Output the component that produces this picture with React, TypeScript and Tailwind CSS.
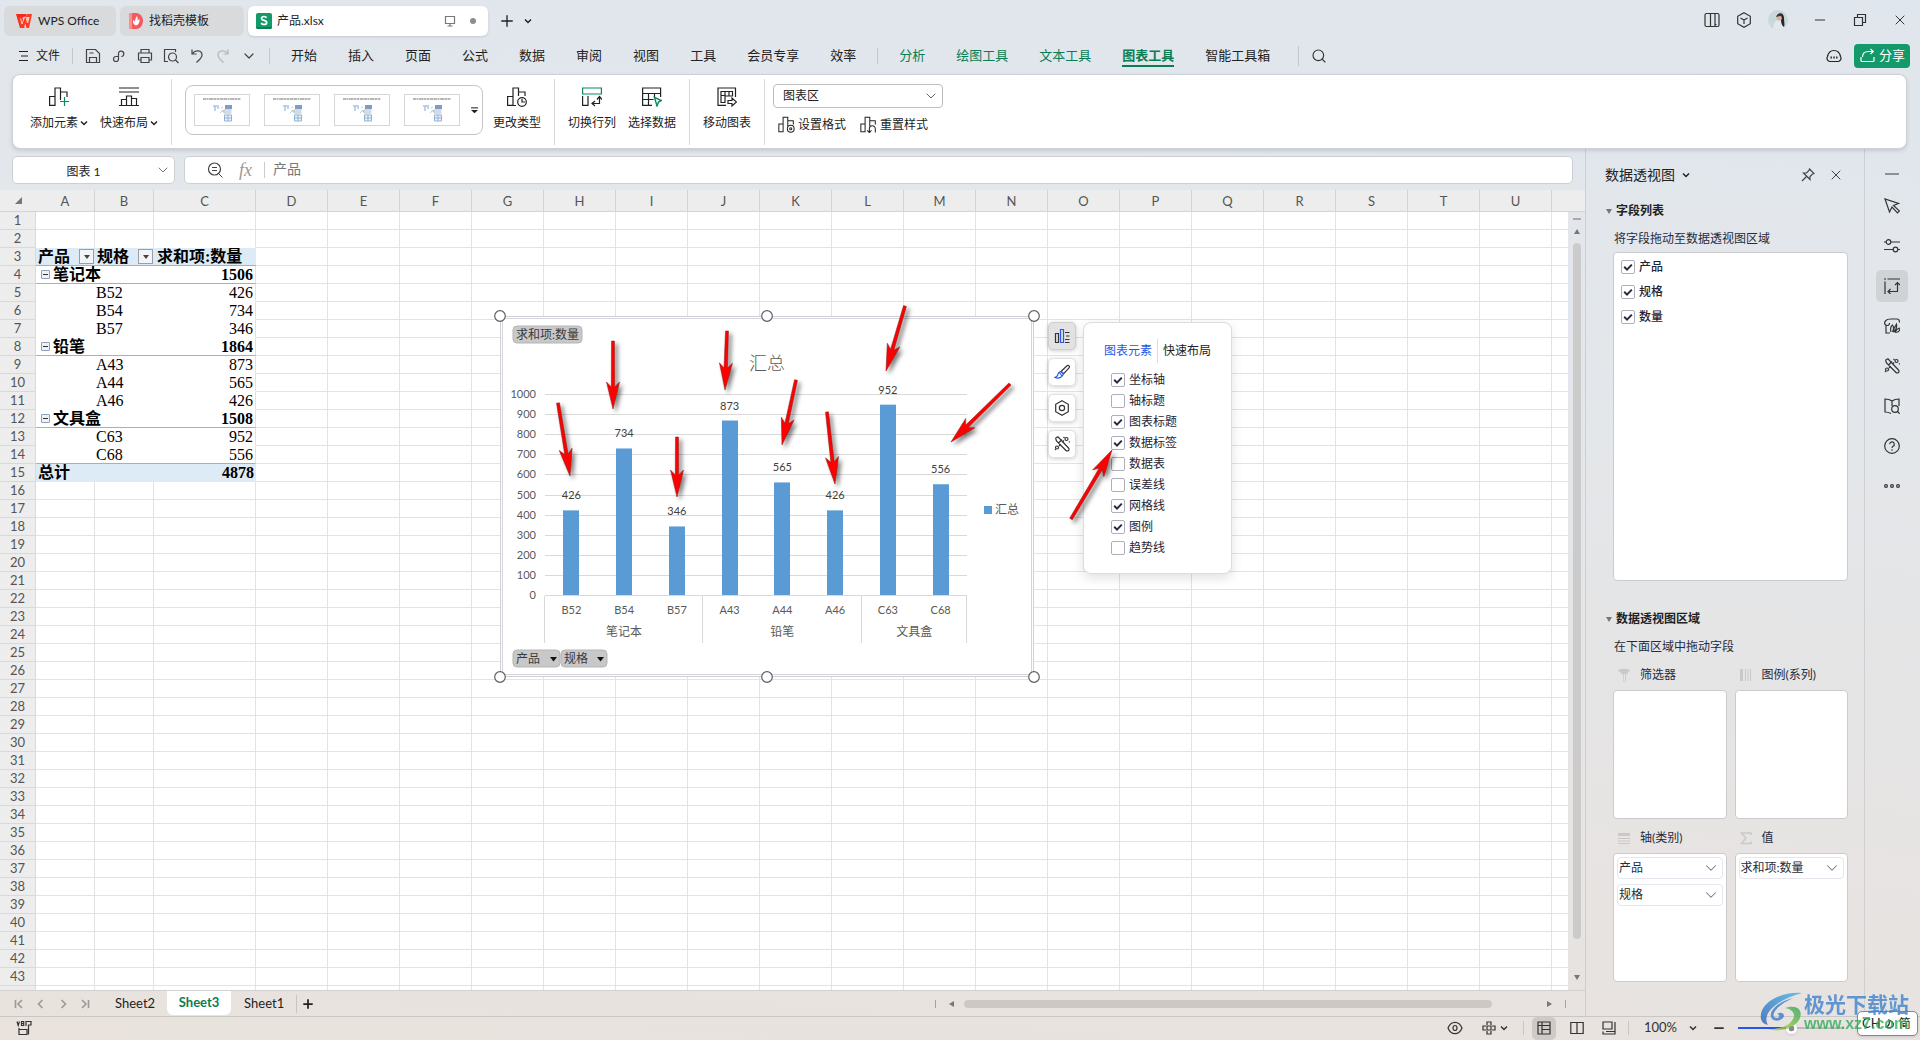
import { useState, type ReactNode } from 'react';
import { ChevronDown, Minus, Plus, Search, X } from 'lucide-react';
import clsx from 'clsx';

const UI_FONT = "font-['Lato','Noto_Sans_CJK_SC',sans-serif]";
const CELL_FONT = "font-['Liberation_Serif','Noto_Sans_CJK_SC',serif]";

function Icon({ size = 'size-5', box = 20, children }: { size?: string; box?: number; children: ReactNode }) {
  return (
    <svg
      viewBox={`0 0 ${box} ${box}`}
      className={clsx('shrink-0', size)}
      fill="none"
      stroke="currentColor"
      strokeWidth="1.2"
      aria-hidden="true"
    >
      {children}
    </svg>
  );
}

function Caret({ className }: { className?: string }) {
  return (
    <svg viewBox="0 0 8 8" className={clsx('size-2 shrink-0', className)} fill="none" stroke="currentColor" strokeWidth="1.500">
      <path d="m1 2.500 3 3 3-3" />
    </svg>
  );
}

function Check({ label, checked = true, bold }: { label: string; checked?: boolean; bold?: boolean }) {
  const [on, setOn] = useState(checked);
  return (
    <label className="flex items-center gap-1">
      <span className="relative flex size-[14px]">
        <input
          type="checkbox"
          checked={on}
          onChange={() => setOn(!on)}
          className="size-[14px] appearance-none rounded-[2px] border border-[#adb0ba] bg-white"
        />
        {on && (
          <svg viewBox="0 0 14 14" className="pointer-events-none absolute inset-0 size-[14px]" fill="none" stroke="#252a3d" strokeWidth="2">
            <path d="M3.2 6.8 6 9.6 10.8 4.6" />
          </svg>
        )}
      </span>
      <span className={clsx('text-xs leading-4 text-[#1f2433]', bold && 'font-medium')}>{label}</span>
    </label>
  );
}

/* ---------- title bar ---------- */

function TitleBar() {
  return (
    <header className="flex h-10 shrink-0 items-start pt-[6px] pl-1 text-xs text-[#222]">
      <button type="button" className="flex h-[30px] w-28 items-center gap-[6px] rounded-md bg-[#d8dadc] pl-3">
        <svg viewBox="0 0 16 14" className="h-[14px] w-4">
          <path d="M0 0h10l1 3.200h-4.600l2.200 10.800h-4.600z" fill="#f5281e" />
          <path d="M2.500 3h2.500l1.400 6 2-6h2l1.400 5 1.200-5h-2.500V0H16l-3 14H10.500L9.300 9.500 7.500 14H4.800z" fill="#fb3b22" />
          <path d="M4.700 4.500 6 10l2.600-7h1.200l1.800 6 1.500-6" fill="none" stroke="#ffdcd4" strokeWidth=".9" />
        </svg>
        WPS Office
      </button>
      <button type="button" className="ml-1 flex h-[30px] w-[124px] items-center gap-[6px] rounded-md bg-[#d8dadc] pl-[9px]">
        <svg viewBox="0 0 14 16" className="h-4 w-[14px]">
          <path d="M0 2a2 2 0 0 1 2-2h5a7 8 0 0 1 0 16H0z" fill="#f15a5e" />
          <path d="M0 2a2 2 0 0 1 2-2h1v16H0z" fill="#ff8d8d" />
          <path d="M7 12.500C3.500 11 4 8.500 4 7c1 .5 1.500 1 2 2 0-2 .5-4 2-6 1 2 .5 3.500.5 5 .5-1 1-1.500 2-2 .5 3-1 6-3.500 6.500z" fill="#fff" />
        </svg>
        找稻壳模板
      </button>
      <div className="ml-1 flex h-[30px] w-60 items-center rounded-md bg-white px-2 shadow-sm">
        <svg viewBox="0 0 16 16" className="size-4">
          <rect width="16" height="16" rx="2" fill="#14996a" />
          <path d="M0 14h16v0a2 2 0 0 1-2 2H2a2 2 0 0 1-2-2z" fill="#0b7c54" />
          <path d="M10.600 4.700C10 3.800 9 3.500 8 3.500c-1.500 0-2.500.8-2.500 2 0 2.600 5.200 1.200 5.200 4 0 1.200-1.100 2-2.700 2-1.200 0-2.300-.5-2.800-1.500" fill="none" stroke="#fff" strokeWidth="1.700" />
        </svg>
        <span className="ml-[5px] flex-1">产品.xlsx</span>
        <Icon size="size-3" box={12}>
          <path d="M1.500 1.500h9v7h-9zM6 8.500v2.500M3.500 11h5" stroke="#777" />
        </Icon>
        <span className="mr-1 ml-[14px] size-[6px] rounded-full bg-[#8d8d8d]" />
      </div>
      <button type="button" aria-label="新建" className="ml-[10px] flex h-[30px] items-center">
        <Plus className="size-[18px]" strokeWidth={1.800} />
      </button>
      <button type="button" aria-label="更多标签" className="ml-2 flex h-[30px] items-center">
        <Caret />
      </button>
      <div className="ml-auto flex h-7 items-center pr-3 text-[#333]">
        <Icon size="size-4" box={16}>
          <rect x="1" y="1.500" width="14" height="13" rx="1.500" />
          <path d="M6.500 1.500v13M11 1.500v13M11 12.500h1.500" />
        </Icon>
        <span className="ml-4 flex">
          <Icon size="size-4" box={16}>
            <path d="M8 .8 14.300 4.300v7.400L8 15.200 1.700 11.700V4.300zM4.500 6 8 8l3.500-2M8 8v4" />
          </Icon>
        </span>
        <svg viewBox="0 0 20 20" className="ml-4 size-5">
          <circle cx="10" cy="10" r="10" fill="#c9d9da" />
          <path d="M5 19c0-5 2-8 5-9l4 1 2 6.500c-2 2-8 3-11 1.500z" fill="#dfeaec" />
          <path d="M10 4c3-2 6 0 6 4 0 4 1 6 0 9-2-1-3-4-3-7z" fill="#2b2430" />
          <circle cx="11.200" cy="8" r="2.600" fill="#dcb2a0" />
          <path d="M8 7c1-4 5-4 7-2l-3 1z" fill="#43303a" />
        </svg>
        <Minus className="ml-6 size-4" strokeWidth={1.500} />
        <span className="ml-6 flex">
          <Icon size="size-4" box={16}>
            <path d="M2.500 5.500h8v8h-8zM5.500 5.500v-3h8v8h-3" />
          </Icon>
        </span>
        <X className="ml-6 size-4" strokeWidth={1.500} />
      </div>
    </header>
  );
}

/* ---------- menu row ---------- */

const MENU = ['开始', '插入', '页面', '公式', '数据', '审阅', '视图', '工具', '会员专享', '效率'];
const CONTEXT_MENU = ['分析', '绘图工具', '文本工具'];

function MenuBar() {
  return (
    <nav className="flex h-[34px] shrink-0 items-center pb-[3px] pl-[18px] text-[13px] text-[#222]">
      <button type="button" className="flex items-center gap-[6px] text-xs">
        <Icon size="size-3" box={12}>
          <path d="M1 1.500h9M3 6h7M1 10.500h9" />
        </Icon>
        文件
      </button>
      <span className="ml-3 h-4 w-px bg-[#c3c6ca]" />
      <div className="ml-3 flex items-center gap-[10px] text-[#444]">
        <Icon size="size-4" box={16}>
          <path d="M1.500 1.500h9l4 4v9h-13zM4.500 14.500v-5h7v5M4.500 5h4" />
        </Icon>
        <Icon size="size-4" box={16}>
          <path d="M7.500 8.500H5a2.500 2.500 0 1 0 2.500 2.500V5A2.700 2.700 0 1 1 10.300 8.500" />
        </Icon>
        <Icon size="size-4" box={16}>
          <path d="M4 5V1.500h8V5M4 12H1.500V5h13v7H12M4 9.500h8v5H4z" />
        </Icon>
        <Icon size="size-4" box={16}>
          <path d="M5 13.500H1.500v-12h11V4" />
          <circle cx="9.500" cy="9" r="4" />
          <path d="m12.500 12 3 3" />
        </Icon>
        <Icon size="size-4" box={16}>
          <path d="M3 1.500V6h4.500M3.500 5.500C6 1.500 13 2 13 7c0 3-2.500 4.500-5.500 7.500" />
        </Icon>
        <span className="flex text-[#b3b6ba]">
          <Icon size="size-4" box={16}>
            <path d="M13 1.500V6H8.500M12.500 5.500C10 1.500 3 2 3 7c0 3 2.500 4.500 5.500 7.500" />
          </Icon>
        </span>
        <ChevronDown className="size-4" strokeWidth={1.800} />
      </div>
      <span className="ml-3 h-4 w-px bg-[#c3c6ca]" />
      <div className="ml-[21px] flex items-center gap-[31px]">
        {MENU.map((m) => (
          <button key={m} type="button">
            {m}
          </button>
        ))}
      </div>
      <span className="ml-[21px] h-4 w-px bg-[#c3c6ca]" />
      <div className="ml-[21px] flex items-center gap-[31px] text-[#0b7d52]">
        {CONTEXT_MENU.map((m) => (
          <button key={m} type="button">
            {m}
          </button>
        ))}
        <button type="button" className="mt-[2px] border-b-2 border-[#0b7d52] font-bold">
          图表工具
        </button>
        <button type="button" className="text-[#222]">
          智能工具箱
        </button>
      </div>
      <span className="ml-7 h-5 w-px bg-[#c3c6ca]" />
      <button type="button" aria-label="搜索" className="ml-3 text-[#333]">
        <Search className="size-4" strokeWidth={1.700} />
      </button>
      <div className="ml-auto flex items-center gap-3 pr-[10px]">
        <Icon size="size-4" box={16}>
          <path d="M4 13.500a3.300 3.300 0 0 1-2.500-5C2.500 4 5 2.500 8 2.500s5.500 1.500 6.500 6a3.300 3.300 0 0 1-2.500 5z" />
          <path d="M4.500 9.500h1.400M7.300 9.500h1.400M10.100 9.500h1.400" strokeWidth="1.800" />
        </Icon>
        <button type="button" className="flex h-6 w-14 items-center gap-1 rounded bg-[#129a6b] pl-[6px] text-[13px] text-white">
          <Icon size="size-[15px]" box={15}>
            <path d="M1 9v3.500a1 1 0 0 0 1 1h11a1 1 0 0 0 1-1V9M2.500 9c0-3 2-5.500 6-5.500h4.500M10.500 1l2.800 2.500L10.500 6" />
          </Icon>
          分享
        </button>
      </div>
    </nav>
  );
}

/* ---------- ribbon ---------- */

const BARS = 'M1 9.500h5v9H1zM6 18.500V1.500h5.500V12M11.500 5.500H18V10';

function RibbonButton({ label, icon, caret, className }: { label: string; icon: ReactNode; caret?: boolean; className?: string }) {
  return (
    <button type="button" className={clsx('flex flex-col items-center gap-2 self-start pt-3 whitespace-nowrap', className)}>
      {icon}
      <span className="flex items-center gap-[2px] leading-4">
        {label}
        {caret && <Caret />}
      </span>
    </button>
  );
}

function Divider() {
  return <span className="h-[66px] w-px self-center bg-[#d9d9d9]" />;
}

function Thumb() {
  return (
    <button type="button" aria-label="图表样式" className="h-8 w-14 border border-[#d6d6d6] bg-white">
      <svg viewBox="0 0 54 30" className="h-[30px] w-[54px]">
        <path d="M8 4h38" stroke="#777" strokeWidth="1.500" strokeDasharray="3 .5 2 .6 4 .4" opacity=".7" />
        <path d="M18 11h6M20 11v5M22 13h2" stroke="#a9c3e2" strokeWidth="1.500" />
        <path d="m25 18 3-3M26 13l2-1" stroke="#b8cde6" />
        <path d="M27 16l3-2v5z" fill="#c9c2bd" />
        <rect x="30" y="10" width="7" height="4" fill="#7f9dc0" />
        <rect x="29.500" y="14" width="7" height="5" fill="#d3dde8" />
        <path d="M29.500 20h7v6h-7zM33 20v6M29.500 23h7" fill="#edf3fa" stroke="#8fb1d6" />
      </svg>
    </button>
  );
}

function Ribbon() {
  return (
    <section className="z-10 mr-[13px] ml-3 flex h-[75px] shrink-0 rounded-lg border border-[#cdd0d4] bg-white text-xs text-[#222] shadow-[0_2px_4px_rgba(0,0,0,0.12)]">
      <RibbonButton
        label="添加元素"
        caret
        className="ml-[17px]"
        icon={
          <Icon>
            <path d="M.6 9.500H6v8.900H.6zM6 18.500V1h5.500v12M11.500 5H18v5" />
            <path d="M11 14.500h9M15.500 10v9" stroke="#0b8a5c" />
          </Icon>
        }
      />
      <RibbonButton
        label="快速布局"
        caret
        className="ml-3"
        icon={
          <Icon>
            <path d="M0 1h20M0 5h20M0 18.500h20M2.500 18.500V12.500h5v6M7.500 12.500V9h5v9.500M12.500 11.500h5v7" />
          </Icon>
        }
      />
      <span className="w-[13px]" />
      <Divider />
      <div className="mt-[10px] ml-[13px] flex h-[50px] w-[298px] items-center gap-[14px] self-start rounded-lg border border-[#c4c4c4] pl-2">
        <Thumb />
        <Thumb />
        <Thumb />
        <Thumb />
        <button type="button" aria-label="更多样式" className="-ml-[3px]">
          <Icon size="size-[7px]" box={8}>
            <path d="M0 1h8" />
            <path d="M0 3.500h8L4 7z" fill="currentColor" stroke="none" />
          </Icon>
        </button>
      </div>
      <RibbonButton
        label="更改类型"
        className="ml-[10px]"
        icon={
          <Icon>
            <path d="M.6 9.500H6v8.900H.6zM6 18.500V1h5.500v8M11.500 5H18v4M6 18.500h3" />
            <circle cx="15" cy="15" r="4.300" />
            <path d="M15 12v3h3" />
          </Icon>
        }
      />
      <span className="w-[13px]" />
      <Divider />
      <RibbonButton
        label="切换行列"
        className="ml-[13px]"
        icon={
          <Icon>
            <path d="M.6 1h18.800v6H.6z" stroke="#0b8a5c" />
            <path d="M.6 9v9.400H6V9M17.500 10v6.500H10M15 12.500l2.500-3 2.500 3M13 14l-3 2.500 3 2.500" />
          </Icon>
        }
      />
      <RibbonButton
        label="选择数据"
        className="ml-3"
        icon={
          <Icon>
            <path d="M10 18.400H.6V1h18v9M.6 6.500h18M6.500 6.500v12M12.500 6.500V11M.6 12.500h11" />
            <path d="m12.500 10.500 7 3-3 1.500-1.500 4z" stroke="#0b8a5c" strokeWidth="1.400" />
          </Icon>
        }
      />
      <span className="w-[13px]" />
      <Divider />
      <RibbonButton
        label="移动图表"
        className="ml-[13px]"
        icon={
          <Icon>
            <path d="M9 18.400H1V1h17.500v9M4 4.500h11.500V9H8v6.500H4zM4 8.500h4M8 4.500V9M12 9V4.500" />
            <path d="M11 13.500h4v-2.500l4.500 4-4.500 4v-2.500h-4z" />
          </Icon>
        }
      />
      <span className="w-[13px]" />
      <Divider />
      <div className="ml-2 flex flex-col pt-[9px]">
        <div className="relative w-[170px]">
          <select aria-label="图表元素选择" className="h-6 w-full appearance-none rounded border border-[#bdbdbd] bg-white px-[9px] text-xs">
            <option>图表区</option>
            <option>绘图区</option>
          </select>
          <ChevronDown className="pointer-events-none absolute top-1 right-1 size-4 text-[#666]" strokeWidth={1.500} />
        </div>
        <div className="mt-2 flex gap-[14px] pl-[5px]">
          <button type="button" className="flex items-center gap-[3px]">
            <Icon size="size-[17px]">
              <path d={BARS} />
              <circle cx="15" cy="15" r="4" fill="#fff" />
              <circle cx="15" cy="15" r="1.300" />
            </Icon>
            设置格式
          </button>
          <button type="button" className="flex items-center gap-[3px]">
            <Icon size="size-[17px]">
              <path d={BARS} />
              <path d="M11 19.500V15a3.500 3.500 0 0 1 7 0v4.500M8.500 17l2.500 2.500 2.500-2.500" />
            </Icon>
            重置样式
          </button>
        </div>
      </div>
    </section>
  );
}

/* ---------- sheet ---------- */

const COLUMNS = 'ABCDEFGHIJKLMNOPQRSTU'.split('');

type PivotRow = { kind: 'group' | 'item' | 'total'; name: string; value: number };

const PIVOT: PivotRow[] = [
  { kind: 'group', name: '笔记本', value: 1506 },
  { kind: 'item', name: 'B52', value: 426 },
  { kind: 'item', name: 'B54', value: 734 },
  { kind: 'item', name: 'B57', value: 346 },
  { kind: 'group', name: '铅笔', value: 1864 },
  { kind: 'item', name: 'A43', value: 873 },
  { kind: 'item', name: 'A44', value: 565 },
  { kind: 'item', name: 'A46', value: 426 },
  { kind: 'group', name: '文具盒', value: 1508 },
  { kind: 'item', name: 'C63', value: 952 },
  { kind: 'item', name: 'C68', value: 556 },
  { kind: 'total', name: '总计', value: 4878 },
];

function FilterCell({ text }: { text: string }) {
  return (
    <td className="h-[18px] border-b border-[#8eb4e3] bg-[#ddebf7] p-0 pr-px pl-[2px]">
      <div className="flex h-[17px] items-center justify-between font-bold">
        {text}
        <button type="button" aria-label={`筛选 ${text}`} className="flex size-[15px] items-center justify-center border border-[#9a9da8] bg-[#f2f4f8]">
          <span className="size-0 border-x-[3px] border-t-4 border-x-transparent border-t-[#444]" />
        </button>
      </div>
    </td>
  );
}

function PivotCells({ row }: { row: number }) {
  if (row === 3) {
    return (
      <>
        <FilterCell text="产品" />
        <FilterCell text="规格" />
        <td className="overflow-hidden border-b border-[#8eb4e3] bg-[#ddebf7] p-0 pl-[3px] font-bold">求和项:数量</td>
      </>
    );
  }
  const r = PIVOT[row - 4];
  const total = r.kind === 'total';
  const line = r.kind === 'group' || row === 14 ? 'border-[#8eb4e3]' : total ? 'border-[#ddebf7]' : 'border-white';
  const cell = clsx('border-b p-0', line, total && 'bg-[#ddebf7]', r.kind !== 'item' && 'font-bold');
  return (
    <>
      <td className={cell} colSpan={r.kind === 'item' ? 1 : 2}>
        {r.kind === 'group' && (
          <div className="flex items-center gap-[3px] pl-[5px]">
            <button type="button" aria-label={`折叠 ${r.name}`} className="flex size-[9px] items-center justify-center rounded-[1px] border border-[#8fa0c0] bg-[#eef2f8]">
              <span className="h-px w-[5px] bg-[#333]" />
            </button>
            {r.name}
          </div>
        )}
        {total && <span className="pl-[2px]">{r.name}</span>}
      </td>
      {r.kind === 'item' && <td className={clsx(cell, 'pl-px')}>{r.name}</td>}
      <td className={clsx(cell, 'pr-[2px] text-right', !total && 'border-r border-r-[#e1e1e1]')}>{r.value}</td>
    </>
  );
}

const LAST_ROW = 43;

function Grid() {
  const rows = Array.from({ length: LAST_ROW + 1 }, (_, i) => i + 1);
  return (
    <table className="w-full table-fixed border-separate border-spacing-0 bg-white">
      <colgroup>
        <col className="w-9" />
        <col className="w-[59px]" />
        <col className="w-[59px]" />
        <col className="w-[102px]" />
        {COLUMNS.slice(3).map((c) => (
          <col key={c} className="w-[72px]" />
        ))}
        <col />
      </colgroup>
      <thead>
        <tr className="h-[22px] bg-[#ededed] text-[13px] leading-4 text-[#555]">
          <th className="border-b border-[#d4d4d4] p-0">
            <span className="ml-[15px] block size-0 border-b-[7px] border-l-[7px] border-b-[#777] border-l-transparent" />
          </th>
          {COLUMNS.map((c) => (
            <th key={c} className="border-r border-b border-[#d4d4d4] p-0 font-normal">
              {c}
            </th>
          ))}
          <th className="border-b border-[#d4d4d4] p-0" />
        </tr>
      </thead>
      <tbody className={clsx(CELL_FONT, 'text-base leading-[17px] text-black')}>
        {rows.map((row) => {
          const pivot = row >= 3 && row <= 15;
          const above = row === 2;
          return (
            <tr key={row} className="h-[18px]">
              <th
                className={clsx(
                  UI_FONT,
                  'border-r border-b border-[#d9d9d9] bg-[#ededed] p-0 text-[13px] leading-[17px] font-normal text-[#555]',
                )}
              >
                {row <= LAST_ROW && row}
              </th>
              {pivot && <PivotCells row={row} />}
              {COLUMNS.slice(pivot ? 3 : 0).map((c, i) => (
                <td
                  key={c}
                  className={clsx('border-r border-b border-[#e3e3e3] p-0', above && i < 3 && 'border-b-white')}
                />
              ))}
              <td className="border-b border-[#e3e3e3] p-0" />
            </tr>
          );
        })}
      </tbody>
    </table>
  );
}

/* ---------- chart ---------- */

const POINTS = PIVOT.filter((p) => p.kind === 'item');
const GROUPS = [
  { name: '笔记本', from: 0, to: 3 },
  { name: '铅笔', from: 3, to: 6 },
  { name: '文具盒', from: 6, to: 8 },
];
const PLOT = { left: 45, right: 467, top: 79, bottom: 280 };
const STEP = (PLOT.right - PLOT.left) / POINTS.length;
const yOf = (v: number) => PLOT.bottom - (v / 1000) * (PLOT.bottom - PLOT.top);

function ChartTag({ x, y, w, text, menu }: { x: number; y: number; w: number; text: string; menu?: boolean }) {
  return (
    <g>
      <rect x={x} y={y} width={w} height="17" rx="4" fill="#c8c8c8" stroke="#b5b5b5" />
      <text x={x + 3} y={y + 13} fontSize="12" fill="#3a3a3a">
        {text}
      </text>
      {menu && <path d={`M${x + w - 10} ${y + 7}h7l-3.500 4.500z`} fill="#111" />}
    </g>
  );
}

function Chart() {
  return (
    <svg viewBox="-6 -6 546 373" className="absolute top-[120px] left-[494px] h-[373px] w-[546px]" role="img" aria-label="汇总">
      <rect x=".5" y=".5" width="533" height="360" fill="#fff" stroke="#cfcfd8" />
      <rect x="2.500" y="2.500" width="529" height="356" fill="#fff" stroke="#d4d4da" />
      <text x="267" y="54" textAnchor="middle" fontSize="18" fontWeight="300" fill="#595959">
        汇总
      </text>
      {Array.from({ length: 11 }, (_, i) => i * 100).map((v) => (
        <g key={v}>
          <path d={`M${PLOT.left} ${Math.round(yOf(v)) - 0.5}H${PLOT.right}`} stroke="#d9d9d9" />
          <text x="36" y={yOf(v) + 3} textAnchor="end" fontSize="11" fill="#595959">
            {v}
          </text>
        </g>
      ))}
      {POINTS.map((p, i) => {
        const cx = PLOT.left + STEP * (i + 0.5);
        return (
          <g key={p.name} textAnchor="middle" fontSize="11">
            <rect x={Math.round(cx - 8)} y={yOf(p.value)} width="16" height={PLOT.bottom - yOf(p.value) - 1} fill="#5b9bd5" />
            <text x={cx} y={yOf(p.value) - 11} fill="#404040">
              {p.value}
            </text>
            <text x={cx} y="298" fill="#595959">
              {p.name}
            </text>
          </g>
        );
      })}
      {GROUPS.map((g) => (
        <g key={g.name}>
          <path d={`M${Math.round(PLOT.left + STEP * g.from) - 0.5} ${PLOT.bottom}v47`} stroke="#d9d9d9" />
          <text x={PLOT.left + (STEP * (g.from + g.to)) / 2} y="320" textAnchor="middle" fontSize="12" fill="#595959">
            {g.name}
          </text>
        </g>
      ))}
      <path d={`M${PLOT.right - 0.5} ${PLOT.bottom}v47`} stroke="#d9d9d9" />
      <rect x="484" y="190" width="8" height="8" fill="#5b9bd5" />
      <text x="495" y="198" fontSize="12" fill="#595959">
        汇总
      </text>
      <ChartTag x={13} y={10} w={69} text="求和项:数量" />
      <ChartTag x={13} y={334} w={47} text="产品" menu />
      <ChartTag x={61} y={334} w={46} text="规格" menu />
      {[
        [0, 0],
        [267, 0],
        [534, 0],
        [0, 361],
        [267, 361],
        [534, 361],
      ].map(([x, y]) => (
        <circle key={`${x}-${y}`} cx={x} cy={y} r="5.300" fill="#fff" stroke="#5f5f5f" strokeWidth="1.200" />
      ))}
    </svg>
  );
}

// [tail x, tail y, tip x, tip y] on the sheet canvas
const ARROWS = [
  [558, 213, 570, 286],
  [613, 151, 613, 219],
  [677, 247, 677, 307],
  [727, 141, 725, 200],
  [796, 190, 782, 255],
  [827, 222, 835, 294],
  [905, 116, 886, 181],
  [1010, 194, 951, 252],
  [1071, 329, 1112, 260],
];

function Arrows() {
  return (
    <svg viewBox="0 0 1240 420" className="pointer-events-none absolute top-0 left-0 h-[420px] w-[1240px] drop-shadow-[3px_3px_2px_rgba(0,0,0,0.5)]">
      {ARROWS.map(([x1, y1, x2, y2]) => {
        const len = Math.hypot(x2 - x1, y2 - y1);
        const angle = (Math.atan2(y2 - y1, x2 - x1) * 180) / Math.PI;
        return (
          <g key={`${x1}-${y1}`} transform={`translate(${x2} ${y2}) rotate(${angle})`}>
            <path
              d={`M0 0-27-6.500-22-1.700-${len}-1.500v3L-22 1.700-27 6.500z`}
              fill="#fe0000"
              stroke="#8a1a1a"
              strokeWidth=".5"
            />
          </g>
        );
      })}
    </svg>
  );
}

function WandIcon({ size }: { size?: string }) {
  return (
    <Icon size={size} box={16}>
      <path d="M2 3.500a1.500 1.500 0 0 1 3-1.500l9.500 10a1.500 1.500 0 0 1-2.500 2.500L2.500 5zM4.500 7 8 3.500" />
      <circle cx="12.500" cy="3" r="1.500" />
      <circle cx="3" cy="11.500" r="1.500" />
      <path d="M10 4.500 8.500 6M5 10l1.500-1.500M15 5.500l.8.800M1 14l.8-.8M9.500 1l1 1" />
    </Icon>
  );
}

const TOOL = 'flex size-7 items-center justify-center rounded-[5px] border text-[#333] shadow-[0_1px_4px_rgba(0,0,0,0.2)]';

function ChartTools() {
  return (
    <div className="absolute top-[132px] left-[1048px] flex flex-col gap-2">
      <button type="button" aria-label="图表元素" className={clsx(TOOL, 'border-[#cfcfcf] bg-[#e2e2e2]')}>
        <Icon size="size-4" box={16}>
          <path d="M1.500 5.500h3v9h-3zM11 4.500h4.500M12 8h3.500M11 11.500h4.500M11 14.500h4.500" />
          <path d="M6.500 1.500h3v13h-3z" stroke="#2458e6" />
        </Icon>
      </button>
      <button type="button" aria-label="样式" className={clsx(TOOL, 'border-[#e2e2e2] bg-white')}>
        <Icon size="size-4" box={16}>
          <path d="M7 7.500 13 1.800a1.400 1.400 0 0 1 2 2L9.500 10z" />
          <path d="M7.500 7.500C4.500 7.500 4 9.500 3.500 11.500c-.5 1-1.500 1.500-2.500 2 4 1.500 8-.5 8.500-4zM5.500 8.500l2.500 3.500" stroke="#2458e6" />
        </Icon>
      </button>
      <button type="button" aria-label="设置" className={clsx(TOOL, 'border-[#e2e2e2] bg-white')}>
        <Icon size="size-4" box={16}>
          <path d="M8 .8 14.300 4.300v7.400L8 15.200 1.700 11.700V4.300z" />
          <circle cx="8" cy="8" r="2.600" />
        </Icon>
      </button>
      <button type="button" aria-label="美化" className={clsx(TOOL, 'border-[#e2e2e2] bg-white')}>
        <WandIcon size="size-4" />
      </button>
    </div>
  );
}

const ELEMENTS = [
  { label: '坐标轴', on: true },
  { label: '轴标题', on: false },
  { label: '图表标题', on: true },
  { label: '数据标签', on: true },
  { label: '数据表', on: false },
  { label: '误差线', on: false },
  { label: '网格线', on: true },
  { label: '图例', on: true },
  { label: '趋势线', on: false },
];

function ElementsPopup() {
  return (
    <div className="absolute top-[132px] left-[1083px] w-[149px] rounded-lg border border-[#dcdcdc] bg-white pt-4 pb-[17px] shadow-[0_4px_12px_rgba(0,0,0,0.12)]">
      <div className="flex h-6 items-center pl-5 text-xs whitespace-nowrap">
        <button type="button" className="text-[#2458e6]">
          图表元素
        </button>
        <span className="mx-[5px] h-6 w-px bg-[#dcdcdc]" />
        <button type="button" className="text-[#222]">
          快速布局
        </button>
      </div>
      <div className="mt-[9px] flex flex-col gap-[5px] pl-[27px]">
        {ELEMENTS.map((e) => (
          <Check key={e.label} label={e.label} checked={e.on} />
        ))}
      </div>
    </div>
  );
}

/* ---------- side panel ---------- */

function SectionTitle({ children }: { children: ReactNode }) {
  return (
    <h3 className="flex items-center gap-1 text-xs leading-4 font-bold text-[#222]">
      <span className="size-0 border-x-[3px] border-t-[5px] border-x-transparent border-t-[#777]" />
      {children}
    </h3>
  );
}

function DropZone({ title, icon, fields = [] }: { title: string; icon: ReactNode; fields?: string[] }) {
  return (
    <div className="flex-1">
      <div className="flex h-4 items-center gap-[9px] pl-1 text-xs text-[#262b3a]">
        <span className="flex text-[#c9c9c9]">{icon}</span>
        {title}
      </div>
      <div className="mt-[7px] flex h-[129px] flex-col gap-[5px] rounded border border-[#cbcbcf] bg-white p-[3px]">
        {fields.map((f) => (
          <button
            key={f}
            type="button"
            className="flex h-[22px] items-center justify-between rounded border border-[#e6e6ee] pr-[2px] pl-px text-xs text-[#262b3a]"
          >
            {f}
            <ChevronDown className="size-[18px] text-[#777]" strokeWidth={1.400} />
          </button>
        ))}
      </div>
    </div>
  );
}

function PivotPanel() {
  return (
    <aside className="w-[279px] shrink-0 border-l border-[#cfcfd3] pt-4 pr-4 pl-[19px]">
      <div className="flex h-5 items-center text-sm text-[#222]">
        数据透视图
        <Caret className="ml-[7px]" />
        <button type="button" aria-label="固定" className="ml-auto text-[#444]">
          <Icon size="size-[14px]" box={14}>
            <path d="m8.500 1 4.500 4.500-1.500.5-2.500 2.500v3L2.500 5h3L8 2.500zM5.500 8.500 1 13" />
          </Icon>
        </button>
        <button type="button" aria-label="关闭" className="mr-1 ml-[13px] text-[#444]">
          <X className="size-4" strokeWidth={1.500} />
        </button>
      </div>
      <div className="mt-[18px] pl-px">
        <SectionTitle>字段列表</SectionTitle>
      </div>
      <p className="mt-3 pl-[9px] text-xs leading-4 text-[#262b3a]">将字段拖动至数据透视图区域</p>
      <div className="mt-[5px] ml-2 flex h-[329px] flex-col gap-[9px] rounded border border-[#cbcbcf] bg-white pt-[6px] pl-[7px]">
        <Check label="产品" bold />
        <Check label="规格" bold />
        <Check label="数量" bold />
      </div>
      <div className="mt-[30px] pl-px">
        <SectionTitle>数据透视图区域</SectionTitle>
      </div>
      <p className="mt-3 pl-[9px] text-xs leading-4 text-[#262b3a]">在下面区域中拖动字段</p>
      <div className="mt-3 ml-2 flex gap-2">
        <DropZone
          title="筛选器"
          icon={
            <svg viewBox="0 0 14 14" className="size-[14px]">
              <path d="M1 2.500C2 0 12 0 13 2.500L9 7v6.500H6V7z" fill="#c9c9c9" />
              <path d="M7.300 6v7" stroke="#f2efed" />
            </svg>
          }
        />
        <DropZone
          title="图例(系列)"
          icon={
            <svg viewBox="0 0 14 14" className="size-[14px]">
              <path d="M2.500 1v12" stroke="#c9c9c9" strokeWidth="3" />
              <path d="M6.500 1v12M9 1v12M11.500 1v12" stroke="#c9c9c9" />
            </svg>
          }
        />
      </div>
      <div className="mt-[11px] ml-2 flex gap-2">
        <DropZone
          title="轴(类别)"
          fields={['产品', '规格']}
          icon={
            <svg viewBox="0 0 14 14" className="size-[14px]">
              <path d="M1 3.500h12" stroke="#c9c9c9" strokeWidth="3" />
              <path d="M1 7.500h12M1 10h12M1 12.500h12" stroke="#c9c9c9" />
            </svg>
          }
        />
        <DropZone
          title="值"
          fields={['求和项:数量']}
          icon={
            <svg viewBox="0 0 14 14" className="size-[14px]" fill="none" stroke="#c9c9c9" strokeWidth="1.500">
              <path d="M12 4V2H2.500L7 7.200 2.500 12.500H12v-2" />
            </svg>
          }
        />
      </div>
    </aside>
  );
}

function SideRail() {
  const items = [
    { label: '选择', icon: <path d="m1 1 4.500 13 2.500-5 5.500 6 2-2-6-5.500 5-2z" /> },
    {
      label: '属性',
      icon: (
        <>
          <circle cx="4.500" cy="4" r="2.300" />
          <circle cx="11.500" cy="11.500" r="2.300" />
          <path d="M0 4h2.200M7 4h9M0 11.500h9M14 11.500h2" />
        </>
      ),
    },
    {
      label: '透视表',
      active: true,
      icon: <path d="M3.500 1H16M1 3.500V16M0 1h2M4 13.500h9.500V5M11 7l2.500-2.500L16 7M6.500 11 4 13.500 6.500 16" />,
    },
    {
      label: '图表',
      icon: (
        <>
          <path d="M6 15H2V8M3.500 7.500C0 7.500 0 4 2 2.500 3 1 5 1 7 1h6c2 0 2.500 2 2.500 3.500M3.500 7.500C5 7.500 5.500 6 5.500 5" />
          <path d="M7 14c-1-4 0-6 1.500-7 1.500 2 1.500 4 0 7M9 14c1-4 2-6 3.500-8 .5 3-.5 6-3 8M11 14.500c1-2.500 2.500-4 5-4.500 0 3-2 4.500-5 4.500" />
        </>
      ),
    },
    { label: '美化', wand: true },
    {
      label: '查阅',
      icon: (
        <>
          <path d="M8 3v5M8 3C6 1.500 3.500 1 1 1v13c2 0 4 .5 6 1.500M8 3c2-1.500 4.500-2 7-2v7" />
          <circle cx="11" cy="11" r="3.300" />
          <path d="m13.500 13.500 2.300 2.300" />
        </>
      ),
    },
    {
      label: '帮助',
      icon: (
        <>
          <circle cx="8" cy="8" r="7.300" />
          <path d="M5.700 6.200a2.300 2.300 0 1 1 3.300 2.100c-.7.400-1 .8-1 1.700M8 11.300v1.400" />
        </>
      ),
    },
    {
      label: '更多',
      icon: (
        <>
          <circle cx="2" cy="8" r="1.400" />
          <circle cx="8" cy="8" r="1.400" />
          <circle cx="14" cy="8" r="1.400" />
        </>
      ),
    },
  ];
  return (
    <div className="flex w-14 shrink-0 flex-col items-center border-l border-[#cfcfd3] pt-[17px] pr-[2px] text-[#333]">
      <button type="button" aria-label="收起" className="flex h-4 items-center">
        <span className="h-[2px] w-[14px] bg-[#908f92]" />
      </button>
      <div className="mt-2 flex flex-col gap-2">
        {items.map((it) => (
          <button
            key={it.label}
            type="button"
            aria-label={it.label}
            className={clsx('flex size-8 items-center justify-center rounded-[5px]', it.active && 'bg-[#d0d3d6]')}
          >
            {it.wand ? (
              <WandIcon size="size-4" />
            ) : (
              <Icon size="size-4" box={16}>
                {it.icon}
              </Icon>
            )}
          </button>
        ))}
      </div>
    </div>
  );
}

/* ---------- bars around the sheet ---------- */

function FormulaBar() {
  return (
    <div className="flex h-[41px] shrink-0 gap-[9px] pt-[7px] pr-3 pl-3">
      <div className="relative h-7 w-[163px]">
        <input
          aria-label="名称框"
          defaultValue="图表 1"
          className="h-full w-full rounded-[5px] border border-[#cdd0d2] bg-white pr-5 text-center text-xs text-[#222]"
        />
        <ChevronDown className="pointer-events-none absolute top-[6px] right-1 size-4 text-[#777]" strokeWidth={1.500} />
      </div>
      <div className="flex h-7 flex-1 items-center rounded-[5px] border border-[#cdd0d2] bg-white pl-[22px] text-[#444]">
        <Icon size="size-4" box={16}>
          <circle cx="7.500" cy="7" r="6" />
          <path d="m11.500 11.500 4 4M5 5.500h5M5 8.500h5" strokeWidth="1" />
        </Icon>
        <span className="ml-4 font-['Liberation_Serif',serif] text-lg leading-5 text-[#999] italic">fx</span>
        <span className="ml-3 h-4 w-px bg-[#ccc]" />
        <input aria-label="编辑栏" defaultValue="产品" className="ml-2 flex-1 bg-transparent pb-[3px] text-sm text-[#777]" />
      </div>
    </div>
  );
}

function VerticalScroll() {
  return (
    <div className="flex w-[17px] shrink-0 flex-col items-center">
      <div className="h-[22px] w-full border-b border-[#d4d4d4] bg-[#ededed]" />
      <span className="mt-[6px] h-[2px] w-2 bg-[#aaa]" />
      <span className="mt-[9px] size-0 border-x-[3px] border-b-[5px] border-x-transparent border-b-[#777]" />
      <span className="mt-[9px] w-2 flex-1 rounded bg-[#cbcbcb]" />
      <span className="mt-9 mb-[10px] size-0 border-x-[3px] border-t-[5px] border-x-transparent border-t-[#777]" />
    </div>
  );
}

function SheetTabs() {
  return (
    <div className="flex h-[26px] shrink-0 items-center border-t border-[#d2d0d0] text-[13px] text-[#222]">
      <div className="flex items-center gap-3 pl-[14px] text-[#9b9896]">
        {[
          ['第一个', 'M1.500 1v8M8 1 4 5l4 4'],
          ['上一个', 'M6.500 1 2.500 5l4 4'],
          ['下一个', 'M3.500 1l4 4-4 4'],
          ['最后一个', 'M2 1l4 4-4 4M8.500 1v8'],
        ].map(([label, d]) => (
          <button key={label} type="button" aria-label={label}>
            <svg viewBox="0 0 10 10" className="size-[10px]" fill="none" stroke="currentColor" strokeWidth="1.600">
              <path d={d} />
            </svg>
          </button>
        ))}
      </div>
      <button type="button" className="ml-[25px]">
        Sheet2
      </button>
      <button type="button" className="mb-[2px] ml-3 h-6 w-16 self-start rounded-b-md bg-white font-bold text-[#0b7d52]">
        Sheet3
      </button>
      <button type="button" className="ml-[13px]">
        Sheet1
      </button>
      <span className="ml-3 h-[18px] w-px bg-[#c9c5c2]" />
      <button type="button" aria-label="添加工作表" className="ml-1">
        <Plus className="size-[14px]" strokeWidth={3} />
      </button>
      <div className="ml-auto flex items-center pr-[19px]">
        <span className="h-2 w-px bg-[#a5a2a0]" />
        <span className="ml-[13px] size-0 border-y-[3px] border-r-[5px] border-y-transparent border-r-[#777]" />
        <span className="ml-[10px] h-2 w-[528px] rounded bg-[#cdc8c4]" />
        <span className="ml-[55px] size-0 border-y-[3px] border-l-[5px] border-y-transparent border-l-[#777]" />
        <span className="ml-[13px] h-2 w-px bg-[#a5a2a0]" />
      </div>
    </div>
  );
}

function StatusBar() {
  return (
    <footer className="flex h-6 shrink-0 items-center border-t border-[#c9c7c6] pb-px text-[13px] text-[#333]">
      <span className="ml-4 flex">
        <Icon size="size-4" box={16}>
          <path d="M1 1.500l1.200 4 1.200-4M5.500 1.500h2.200v4H5.500zM5.500 3.500h2M10 6V1.500h5V5h-2.500v9.500M3 9.500h8v5H3zM3 9.500V8" />
        </Icon>
      </span>
      <div className="ml-auto flex items-center">
        <Icon size="size-4" box={16}>
          <path d="M1 8c3-7.500 11-7.500 14 0-3 7.500-11 7.500-14 0z" />
          <ellipse cx="8" cy="8" rx="2" ry="2.500" />
        </Icon>
        <span className="ml-[19px] flex">
          <Icon size="size-[14px]" box={14}>
            <path d="M5 4V1h4v3M5 10v3h4v-3M4 5H1v4h3M10 5h3v4h-3M5 5h4v4H5z" />
          </Icon>
        </span>
        <Caret className="ml-1" />
        <span className="ml-[15px] h-[14px] w-px bg-[#c9c5c2]" />
        <button type="button" aria-label="普通视图" className="ml-2 flex h-[23px] w-6 items-center justify-center rounded-[5px] bg-[#cfcac6]">
          <Icon size="size-[14px]" box={14}>
            <path d="M1 1h12v12H1zM1 4.500h12M5 1v12M5 8.500h8" />
          </Icon>
        </button>
        <button type="button" aria-label="分页预览" className="ml-[14px]">
          <Icon size="size-[14px]" box={14}>
            <path d="M.8 1.500h12.400v11H.8zM7 1.500v11" />
          </Icon>
        </button>
        <button type="button" aria-label="页面布局" className="ml-[18px]">
          <Icon size="size-[14px]" box={14}>
            <path d="M1 1h9v7H1zM13 1v12H1v-2.500M4 10.500h9" />
          </Icon>
        </button>
        <span className="ml-3 h-[14px] w-px bg-[#c9c5c2]" />
        <span className="ml-[15px] w-[34px]">100%</span>
        <Caret className="ml-[11px]" />
        <Minus className="ml-[15px] size-[14px]" strokeWidth={3} />
        <input
          type="range"
          aria-label="缩放"
          defaultValue={50}
          className="ml-3 h-[2px] w-[106px] appearance-none bg-[linear-gradient(to_right,#2458e6_50%,#bcbabc_50%)] [&::-webkit-slider-thumb]:size-[11px] [&::-webkit-slider-thumb]:appearance-none [&::-webkit-slider-thumb]:rounded-full [&::-webkit-slider-thumb]:bg-[radial-gradient(#8a8a8a_35%,#fff_40%)] [&::-webkit-slider-thumb]:shadow"
        />
        <span className="w-[76px]" />
      </div>
    </footer>
  );
}

function ImeBadge() {
  return (
    <div className="absolute right-[2px] bottom-1 z-20 flex h-[25px] w-[61px] items-center gap-1 rounded-[5px] border border-[#888] bg-white pl-1 text-[13px] text-[#222] shadow">
      CH
      <Icon size="size-[10px]" box={10}>
        <path d="M4 1c3 1 5 3 4 6-2 2-5 2-7 1 3-1 4-3 3-7z" />
      </Icon>
      <span className="text-xs">简</span>
    </div>
  );
}

function SiteMark() {
  return (
    <div className="pointer-events-none absolute right-[10px] bottom-2 z-30 flex items-center opacity-80">
      <svg viewBox="0 0 42 40" className="h-10 w-[42px]">
        <defs>
          <linearGradient id="swoosh" x1="0" y1="1" x2="1" y2="0">
            <stop offset="0" stopColor="#2b62b8" />
            <stop offset="1" stopColor="#45b7e8" />
          </linearGradient>
          <linearGradient id="leaf" x1="0" y1="1" x2="1" y2="0">
            <stop offset="0" stopColor="#c7d63a" />
            <stop offset="1" stopColor="#2ea65b" />
          </linearGradient>
        </defs>
        <path d="M42 1C20-1-2 12 1 27c1 4 4 5 7 6-6-10 5-24 34-32z" fill="url(#swoosh)" />
        <path d="M33 6C20 9 9 18 11 25c2 6 12 4 13-1 0-4-5-4-7-2 3 0 3 4 0 4-7 0-4-11 16-20z" fill="#3b7fcb" />
        <path d="M25 16c12-4 18 2 15 10-4 10-19 15-33 11 14 1 26-5 27-13 0-4-3-7-9-8z" fill="url(#leaf)" />
      </svg>
      <div className="ml-[2px] w-[106px] whitespace-nowrap">
        <p className="text-[21px] leading-6 font-bold text-[#3f83cb]">极光下载站</p>
        <p className="font-['Liberation_Sans',sans-serif] text-base leading-4 font-bold text-[#35ad5c]">www.xz7.com</p>
      </div>
    </div>
  );
}

export default function App() {
  return (
    <div
      className={clsx(
        UI_FONT,
        'relative flex h-screen flex-col overflow-hidden bg-[linear-gradient(185deg,#e0e6ed_0%,#e3e7eb_30%,#e6e4e4_65%,#e9e2dd_100%)]',
      )}
    >
      <TitleBar />
      <MenuBar />
      <Ribbon />
      <div className="flex min-h-0 flex-1">
        <main className="flex min-w-0 flex-1 flex-col">
          <FormulaBar />
          <div className="relative flex min-h-0 flex-1 overflow-hidden">
            <div className="min-w-0 flex-1 overflow-hidden">
              <Grid />
            </div>
            <VerticalScroll />
            <Chart />
            <ChartTools />
            <ElementsPopup />
            <Arrows />
          </div>
          <SheetTabs />
        </main>
        <PivotPanel />
        <SideRail />
      </div>
      <StatusBar />
      <ImeBadge />
      <SiteMark />
    </div>
  );
}
